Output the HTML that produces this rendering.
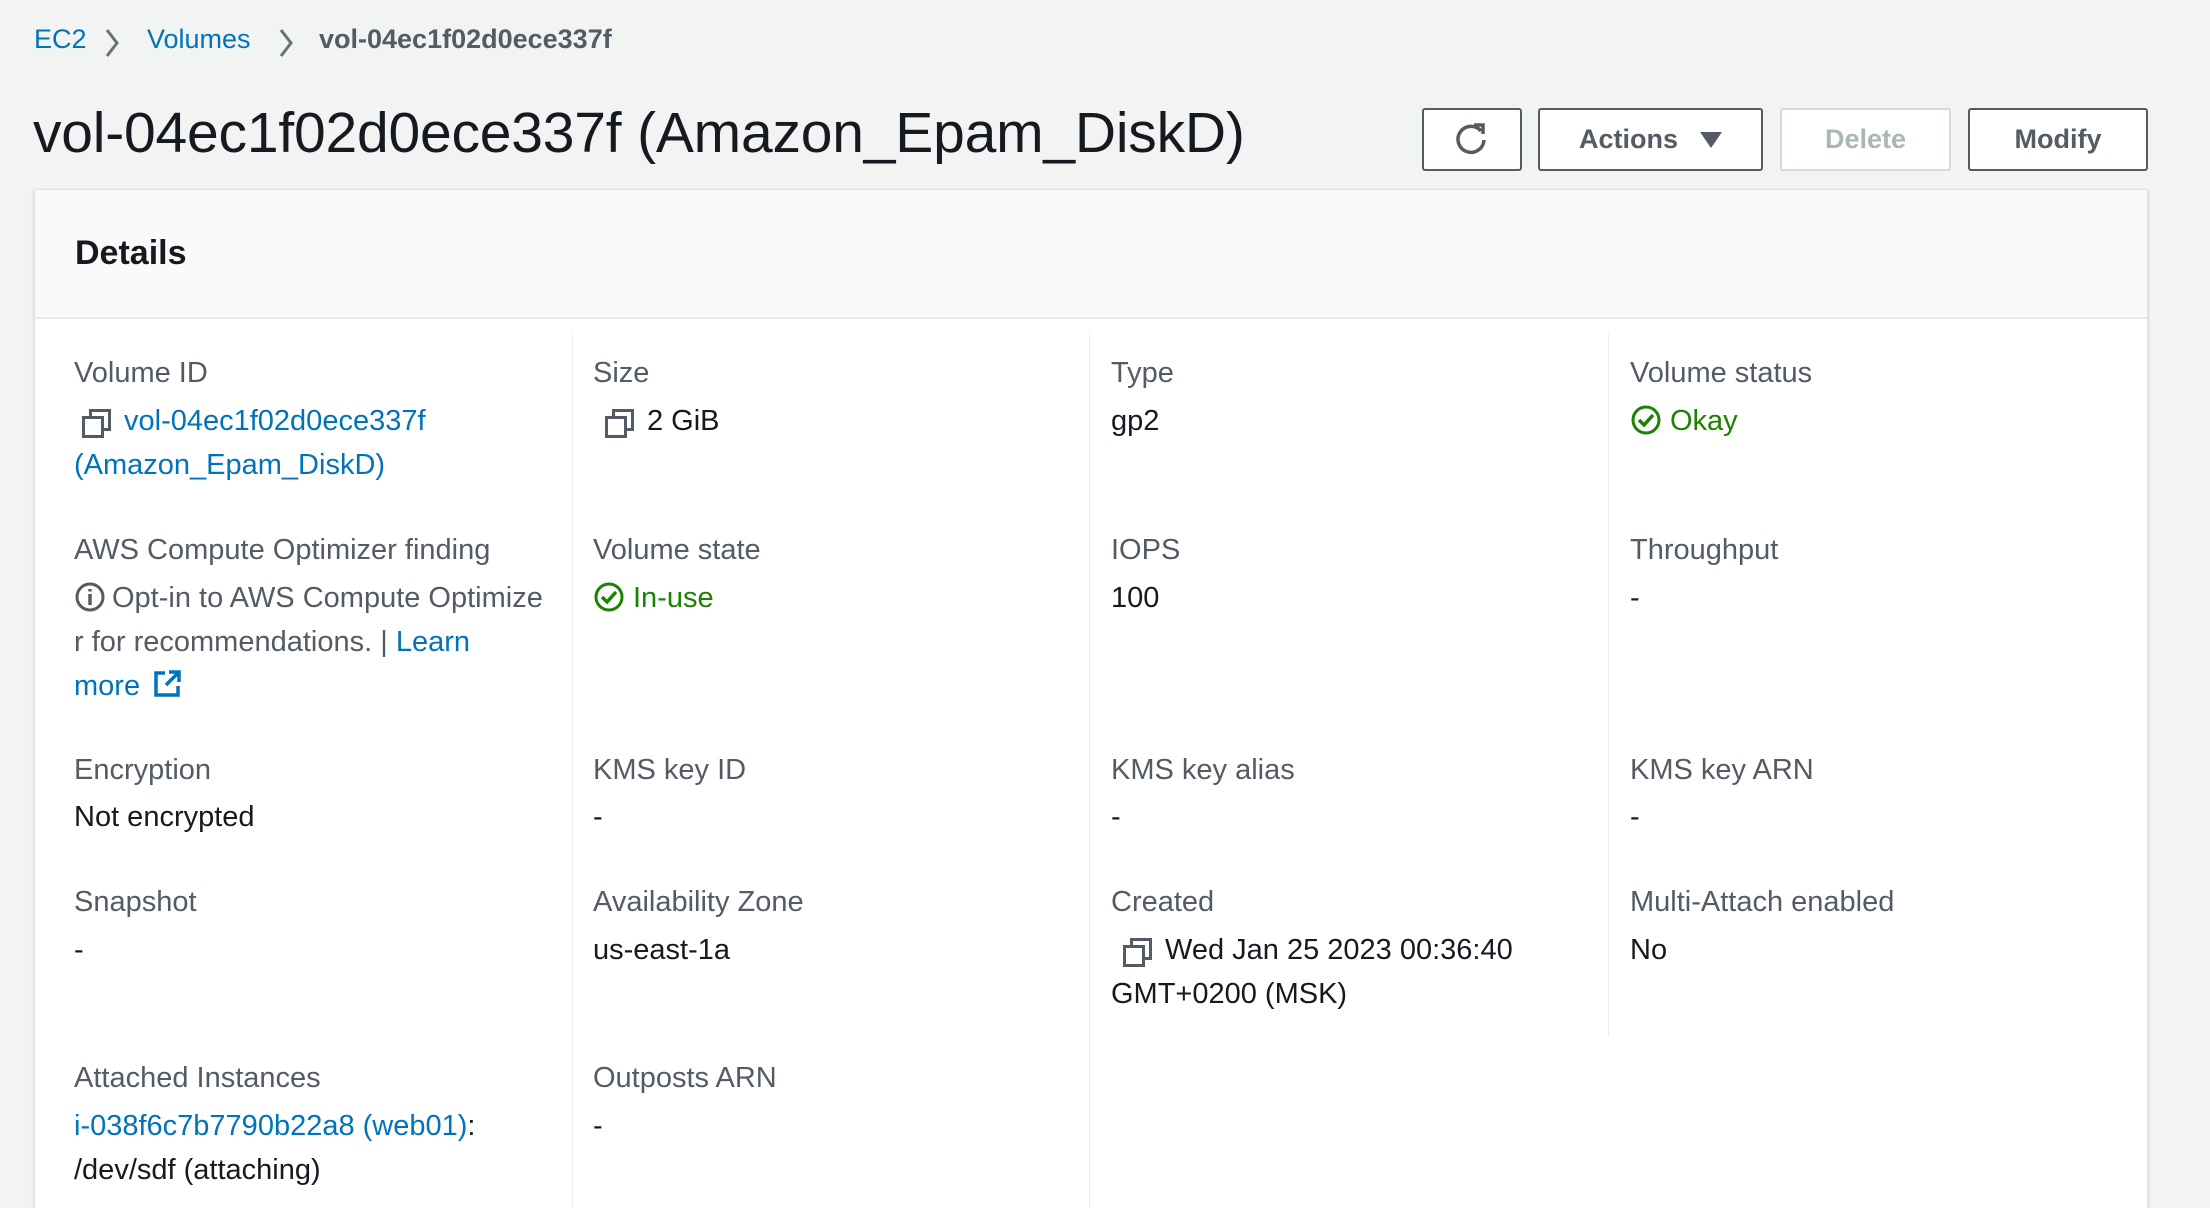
<!DOCTYPE html>
<html><head><meta charset="utf-8"><style>
*{margin:0;padding:0;box-sizing:border-box}
html,body{width:2210px;height:1208px;overflow:hidden}
body{background:#f2f3f3;font-family:"Liberation Sans",sans-serif;position:relative;color:#16191f}
.a{position:absolute;white-space:nowrap}
.bc{top:24px;font-size:27px;color:#0073bb}
.title{left:33px;top:100px;font-size:57px;color:#16191f;letter-spacing:-0.2px}
.btn{position:absolute;top:108px;height:63px;border:2px solid #545b64;border-radius:3px;background:#fff;font-weight:bold;font-size:27px;color:#545b64;display:flex;align-items:center;justify-content:center}
.panel{position:absolute;left:34px;top:189px;width:2114px;height:1030px;background:#fff;box-shadow:0 1px 2px rgba(0,22,43,.25);border:1px solid #e0e3e3}
.hdr{position:absolute;left:0;top:0;right:0;height:129px;background:#fafafa;border-bottom:2px solid #eaeded}
.div{position:absolute;width:1px;background:#eaeded}
.l{position:absolute;font-size:29px;color:#545b64;white-space:nowrap;line-height:44px}
.v{position:absolute;font-size:29px;color:#16191f;white-space:nowrap;line-height:44px}
.lk{color:#0073bb}
.g{color:#1d8102}
.cp{display:inline-block;width:26px;height:24px;position:relative;vertical-align:-3px;margin-right:16px;margin-left:8px}
.cp:before{content:"";position:absolute;left:7px;top:0;width:16px;height:16px;border:3px solid #545b64}
.cp:after{content:"";position:absolute;left:0;top:7px;width:16px;height:16px;border:3px solid #545b64;background:#fff}
</style></head><body>
<div class="a bc" style="left:34px">EC2</div>
<svg class="a" style="left:104px;top:28px" width="16" height="30"><path d="M3 2 L13 15 L3 28" stroke="#687078" stroke-width="3" fill="none"/></svg>
<div class="a bc" style="left:147px">Volumes</div>
<svg class="a" style="left:278px;top:28px" width="16" height="30"><path d="M3 2 L13 15 L3 28" stroke="#687078" stroke-width="3" fill="none"/></svg>
<div class="a bc" style="left:319px;color:#545b64;font-weight:bold">vol-04ec1f02d0ece337f</div>
<div class="a title">vol-04ec1f02d0ece337f (Amazon_Epam_DiskD)</div>
<div class="btn" style="left:1422px;width:100px"><svg width="36" height="36" viewBox="0 0 36 36"><path d="M27 9 A13 13 0 1 0 30 18" stroke="#545b64" stroke-width="3.5" fill="none"/><path d="M20 3 L29 3 L29 12" stroke="#545b64" stroke-width="3.5" fill="none"/></svg></div>
<div class="btn" style="left:1538px;width:225px">Actions<svg style="margin-left:22px" width="22" height="16"><path d="M0 0 H22 L11 16Z" fill="#545b64"/></svg></div>
<div class="btn" style="left:1780px;width:171px;border-color:#d5dbdb;color:#aab7b8">Delete</div>
<div class="btn" style="left:1968px;width:180px">Modify</div>
<div class="panel">
<div class="hdr"><div class="a" style="left:40px;top:44px;font-size:34px;font-weight:bold">Details</div></div>
<div class="div" style="left:537px;top:144px;height:900px"></div>
<div class="div" style="left:1054px;top:144px;height:900px"></div>
<div class="div" style="left:1573px;top:144px;height:703px"></div>
</div>
<!-- row1 -->
<div class="l" style="left:74px;top:351px">Volume ID</div>
<div class="v lk" style="left:74px;top:399px"><span class="cp"></span>vol-04ec1f02d0ece337f<br>(Amazon_Epam_DiskD)</div>
<div class="l" style="left:593px;top:351px">Size</div>
<div class="v" style="left:593px;top:399px"><span class="cp" style="margin-left:12px"></span>2 GiB</div>
<div class="l" style="left:1111px;top:351px">Type</div>
<div class="v" style="left:1111px;top:399px">gp2</div>
<div class="l" style="left:1630px;top:351px">Volume status</div>
<div class="v g" style="left:1630px;top:399px"><svg width="32" height="32" style="vertical-align:-6px;margin-right:8px"><circle cx="16" cy="16" r="13" stroke="#1d8102" stroke-width="3" fill="none"/><path d="M9 16 L14 21 L23 11" stroke="#1d8102" stroke-width="3.5" fill="none"/></svg>Okay</div>
<!-- row2 -->
<div class="l" style="left:74px;top:528px">AWS Compute Optimizer finding</div>
<div class="v" style="left:74px;top:576px;color:#545b64"><svg width="32" height="32" style="vertical-align:-6px;margin-right:6px"><circle cx="16" cy="16" r="13" stroke="#545b64" stroke-width="3" fill="none"/><path d="M16 13 V24 M16 8 V10.5" stroke="#545b64" stroke-width="3.5" fill="none"/></svg>Opt-in to AWS Compute Optimize<br>r for recommendations. | <span class="lk">Learn</span><br><span class="lk">more <svg width="30" height="30" style="vertical-align:-4px;margin-left:4px"><path d="M13 4 H4 V26 H26 V17" stroke="#0073bb" stroke-width="3.5" fill="none"/><path d="M17 3 H27 V13 M27 3 L14 16" stroke="#0073bb" stroke-width="3.5" fill="none"/></svg></span></div>
<div class="l" style="left:593px;top:528px">Volume state</div>
<div class="v g" style="left:593px;top:576px"><svg width="32" height="32" style="vertical-align:-6px;margin-right:8px"><circle cx="16" cy="16" r="13" stroke="#1d8102" stroke-width="3" fill="none"/><path d="M9 16 L14 21 L23 11" stroke="#1d8102" stroke-width="3.5" fill="none"/></svg>In-use</div>
<div class="l" style="left:1111px;top:528px">IOPS</div>
<div class="v" style="left:1111px;top:576px">100</div>
<div class="l" style="left:1630px;top:528px">Throughput</div>
<div class="v" style="left:1630px;top:576px">-</div>
<!-- row3 -->
<div class="l" style="left:74px;top:748px">Encryption</div>
<div class="v" style="left:74px;top:795px">Not encrypted</div>
<div class="l" style="left:593px;top:748px">KMS key ID</div>
<div class="v" style="left:593px;top:795px">-</div>
<div class="l" style="left:1111px;top:748px">KMS key alias</div>
<div class="v" style="left:1111px;top:795px">-</div>
<div class="l" style="left:1630px;top:748px">KMS key ARN</div>
<div class="v" style="left:1630px;top:795px">-</div>
<!-- row4 -->
<div class="l" style="left:74px;top:880px">Snapshot</div>
<div class="v" style="left:74px;top:928px">-</div>
<div class="l" style="left:593px;top:880px">Availability Zone</div>
<div class="v" style="left:593px;top:928px">us-east-1a</div>
<div class="l" style="left:1111px;top:880px">Created</div>
<div class="v" style="left:1111px;top:928px"><span class="cp" style="margin-left:12px"></span>Wed Jan 25 2023 00:36:40<br>GMT+0200 (MSK)</div>
<div class="l" style="left:1630px;top:880px">Multi-Attach enabled</div>
<div class="v" style="left:1630px;top:928px">No</div>
<!-- row5 -->
<div class="l" style="left:74px;top:1056px">Attached Instances</div>
<div class="v" style="left:74px;top:1104px"><span class="lk">i-038f6c7b7790b22a8 (web01)</span>:<br>/dev/sdf (attaching)</div>
<div class="l" style="left:593px;top:1056px">Outposts ARN</div>
<div class="v" style="left:593px;top:1104px">-</div>
</body></html>
